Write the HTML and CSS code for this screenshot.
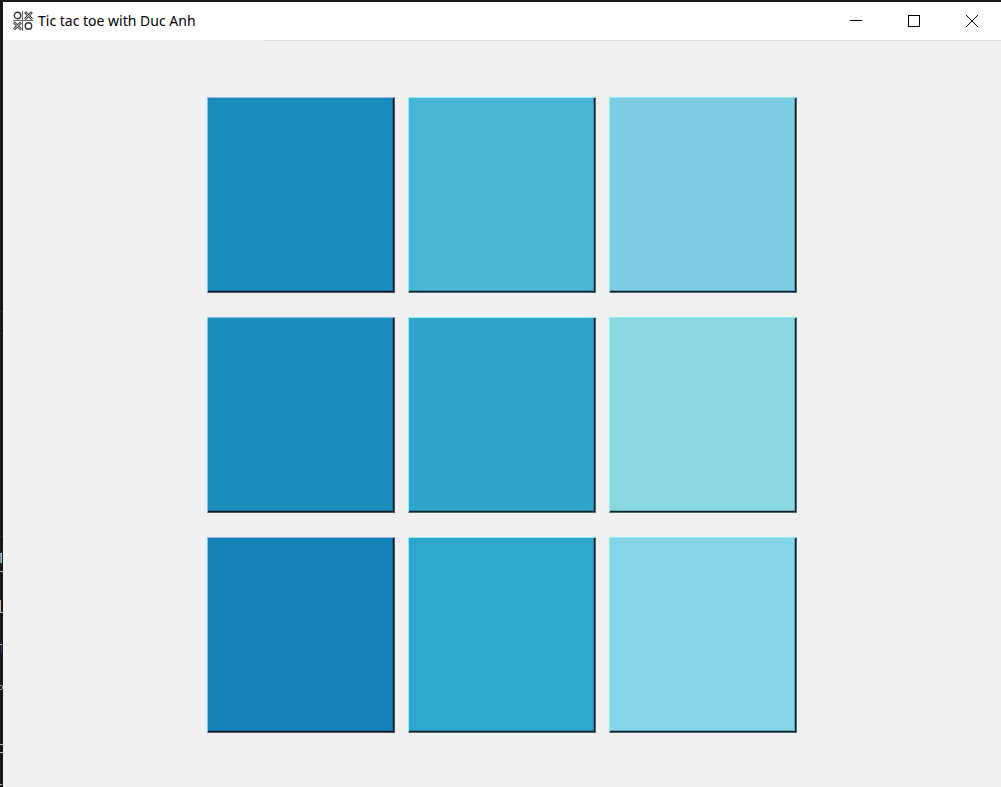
FILE: index.html
```html
<!DOCTYPE html>
<html lang="en">
<head>
<meta charset="utf-8">
<title>Tic tac toe with Duc Anh</title>
<link rel="stylesheet" href="styles.css">
</head>
<body>
<svg class="backdrop" width="3" height="787" viewBox="0 0 3 787" shape-rendering="crispEdges" aria-hidden="true">
  <path fill="#292929" d="M0 311h3v1H0zM0 333h3v1H0zM0 536h3v1H0z"/>
  <path fill="#b8b8b8" d="M0 553h2v1H0zM0 571h3v1H0zM0 612h3v1H0zM0 644h2v1H0zM0 744h3v1H0zM0 752h3v1H0zM0 784h2v1H0z"/>
  <path fill="#2da5d2" d="M0 554h1v9H0z"/>
  <path fill="#d0b09a" d="M1 554h1v9H1zM0 600h1v12H0z"/>
  <path fill="#38387a" d="M1 645h1v8H1z"/>
  <path fill="#9a9aa8" d="M0 685h2v1H0zM2 686h1v3H2zM0 689h2v1H0z"/>
</svg>
<div class="window">
  <header class="titlebar">
    <svg class="app-icon" width="20" height="20" viewBox="0 0 20 20" fill="none" stroke="#333" aria-hidden="true">
      <path stroke="#666" d="M9.5 0v20M0 9.5h20"/>
      <circle cx="4.5" cy="4.5" r="3.2" stroke-width="1.4"/>
      <circle cx="15.5" cy="15" r="3.2" stroke-width="1.4"/>
      <path stroke-width="2.6" d="M12 1.2l7 7M19 1.2l-7 7M1 11.4l7 7M8 11.4l-7 7"/>
      <path stroke="#ddd" stroke-width="1" d="M12.4 1.6l6.2 6.2M18.6 1.6l-6.2 6.2M1.4 11.8l6.2 6.2M7.6 11.8l-6.2 6.2"/>
    </svg>
    <h1 class="title">Tic tac toe with Duc Anh</h1>
    <div class="controls">
      <button class="control" type="button" aria-label="Minimize"><svg width="12" height="12" viewBox="0 0 12 12" shape-rendering="crispEdges"><path d="M0 5.5h12"/></svg></button>
      <button class="control" type="button" aria-label="Maximize"><svg width="12" height="12" viewBox="0 0 12 12" shape-rendering="crispEdges"><path d="M.5 .5h11v11H.5z"/></svg></button>
      <button class="control" type="button" aria-label="Close"><svg width="12" height="12" viewBox="0 0 12 12"><path d="M0 0l12 12M12 0L0 12"/></svg></button>
    </div>
  </header>
  <main class="content">
    <div class="board">
      <button class="cell deep c1" type="button" aria-label="Row 1, column 1"></button>
      <button class="cell c2" type="button" aria-label="Row 1, column 2"></button>
      <button class="cell c3" type="button" aria-label="Row 1, column 3"></button>
      <button class="cell deep c4" type="button" aria-label="Row 2, column 1"></button>
      <button class="cell c5" type="button" aria-label="Row 2, column 2"></button>
      <button class="cell c6" type="button" aria-label="Row 2, column 3"></button>
      <button class="cell deep c7" type="button" aria-label="Row 3, column 1"></button>
      <button class="cell c8" type="button" aria-label="Row 3, column 2"></button>
      <button class="cell c9" type="button" aria-label="Row 3, column 3"></button>
    </div>
  </main>
</div>
</body>
</html>
```
FILE: styles.css
```css
* { box-sizing: border-box; }
body {
  margin: 0;
  min-height: 100vh;
  display: flex;
  padding-top: 2px;
  background: #18171a;
  font-family: "Noto Sans", "Open Sans", sans-serif;
  overflow: hidden;
}
.backdrop {
  position: absolute;
  left: 0;
  top: 0;
}
.window {
  flex: 1;
  margin-left: 3px;
  display: flex;
  flex-direction: column;
  background: #f0f0f0;
}
.titlebar {
  display: flex;
  align-items: center;
  height: 38px;
  padding-left: 10px;
  background: #fff;
}
.title {
  margin: 0 0 0 5px;
  font-size: 14px;
  line-height: 20px;
  font-weight: 400;
  color: #000;
}
.controls {
  margin-left: auto;
  display: flex;
  align-self: stretch;
}
.control {
  width: 58px;
  padding: 0;
  border: 0;
  background: none;
  display: flex;
  align-items: center;
  justify-content: center;
}
.control svg {
  fill: none;
  stroke: #000;
}
.content {
  flex: 1;
  padding: 56px 20px;
  background: linear-gradient(#d9d9d9, #d9d9d9) 260px 0 / 100% 1px no-repeat;
}
.board {
  display: grid;
  grid-template-columns: repeat(3, 1fr);
  grid-auto-rows: 196px;
  gap: 24px 13px;
  max-width: 590px;
  margin: 0 auto;
  padding-top: 1px;
}
.cell {
  padding: 0;
  border: 1px solid;
  border-color: #8df0f6 #53686c #53686c #8df0f6;
  border-radius: 0;
  box-shadow: inset -1px -1px #0d2229, inset -2px -2px rgb(0 30 50 / 25%);
}
.deep {
  border-color: #8dbcee #53565e #53565e #8dbcee;
  box-shadow: inset -1px -1px #08152a, inset -2px -2px rgb(0 30 70 / 25%);
}
.c1 { background: #198bb8; }
.c2 { background: #48b7d7; }
.c3 { background: #7bcde3; }
.c4 { background: #1b8ebc; }
.c5 { background: #2fa5cb; }
.c6 { background: #89d8e1; }
.c7 { background: #1583b7; }
.c8 { background: #2fa6cb; }
.c9 { background: #84d5e7; }
```
